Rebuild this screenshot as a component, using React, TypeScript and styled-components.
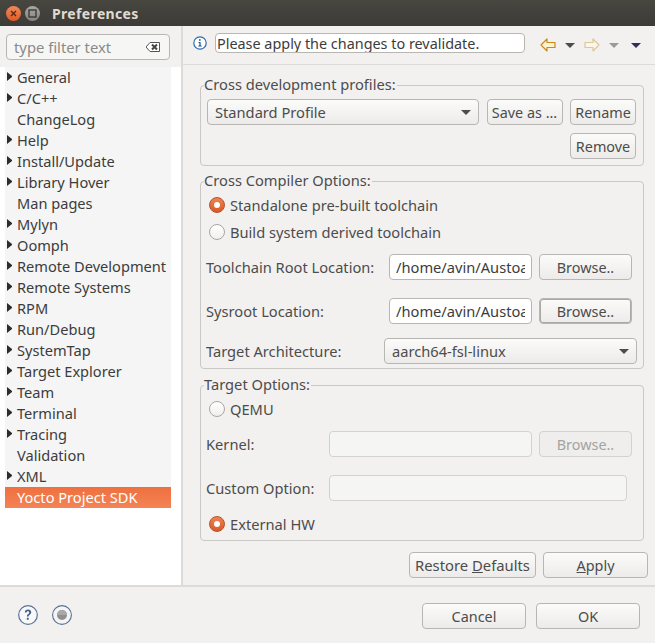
import styled, { createGlobalStyle } from "styled-components";

const GlobalStyle = createGlobalStyle`
  html, body {
    margin: 0;
    padding: 0;
    overflow: hidden;
  }
  * {
    box-sizing: border-box;
  }
`;

const font = `"Noto Sans", "Open Sans", sans-serif`;

const Frame = styled.div`
  width: 655px;
  height: 643px;
  display: flex;
  flex-direction: column;
  background: #f2f1f0;
  font-family: ${font};
  font-size: 14.67px;
  color: #4c4c4c;
`;

const TitleBar = styled.header`
  height: 26px;
  flex: none;
  display: flex;
  align-items: center;
  padding-left: 6px;
  background: linear-gradient(#47463f, #3c3b37);
`;

const WindowButton = styled.span<{ $close?: boolean }>`
  width: 15px;
  height: 15px;
  margin-right: 4px;
  border-radius: 50%;
  display: flex;
  align-items: center;
  justify-content: center;
  background: ${(p) =>
    p.$close
      ? "linear-gradient(#f08a5c, #e25a25)"
      : "linear-gradient(#a9a8a4, #85847f)"};
`;

const Title = styled.h1`
  margin: 0 0 0 8px;
  font-size: 14px;
  font-weight: 700;
  letter-spacing: 0.35px;
  color: #dfdbd2;
`;

const Main = styled.div`
  flex: 1;
  min-height: 0;
  display: flex;
`;

const Sidebar = styled.aside`
  width: 183px;
  flex: none;
  padding: 8px 0 0 5px;
  border-right: 2px solid #dcdbd9;
  background: linear-gradient(#f2f1f0 41px, #fff 41px);
`;

const FilterBox = styled.div`
  width: 164px;
  height: 26px;
  margin-left: 1px;
  padding: 0 9px 0 7px;
  display: flex;
  align-items: center;
  justify-content: space-between;
  background: #f6f6f5;
  border: 1px solid #b8b6b2;
  border-radius: 4px;
  color: #8a8a88;
  font-size: 14.8px;
`;

const Tree = styled.ul`
  list-style: none;
  width: 166px;
  margin: 7px 0 0;
  padding: 0;
  background: #f5f5f5;
`;

const TreeRow = styled.li<{ $selected?: boolean }>`
  height: 21px;
  padding: 0 0 2px 2px;
  display: flex;
  align-items: center;
  font-size: 14.6px;
  white-space: nowrap;
  color: ${(p) => (p.$selected ? "#fff" : "#3c3c3c")};
  background: ${(p) =>
    p.$selected ? "linear-gradient(#ee7040, #f48355)" : "transparent"};
`;

const Twist = styled.span<{ $hidden: boolean }>`
  width: 5px;
  height: 9px;
  margin-right: 5px;
  flex: none;
  visibility: ${(p) => (p.$hidden ? "hidden" : "visible")};
  border-left: 5px solid #2c2c2c;
  border-top: 4.5px solid transparent;
  border-bottom: 4.5px solid transparent;
`;

const Content = styled.section`
  flex: 1;
  min-width: 0;
  display: flex;
  flex-direction: column;
`;

const MessageBar = styled.div`
  height: 39px;
  flex: none;
  padding: 7px 0 0 10px;
  display: flex;
  align-items: flex-start;
  border-bottom: 1px solid #dcdbd9;
`;

const InfoSlot = styled.span`
  margin: 3px 8px 0 0;
  display: flex;
`;

const MessageInput = styled.input`
  width: 310px;
  height: 20px;
  padding: 0 1px;
  font-family: ${font};
  font-size: 14.4px;
  color: #3c3c3c;
  background: #fff;
  border: 1px solid #b8b6b2;
  border-radius: 4px;
  outline: none;
`;

const NavIcons = styled.div`
  margin: 5px 0 0 15px;
  display: flex;
  align-items: center;
`;

const NavArrow = styled.svg<{ $left: number; $flip?: boolean }>`
  margin-left: ${(p) => p.$left}px;
  transform: ${(p) => (p.$flip ? "scaleX(-1)" : "none")};
`;

const NavTriangle = styled.span<{ $color: string; $left: number }>`
  margin-left: ${(p) => p.$left}px;
  border-top: 5px solid ${(p) => p.$color};
  border-left: 5px solid transparent;
  border-right: 5px solid transparent;
`;

const Panels = styled.div`
  flex: 1;
  min-height: 0;
  padding: 12px 7px 0 17px;
  display: flex;
  flex-direction: column;
`;

const Group = styled.fieldset<{ $height: number; $top: number }>`
  width: 444px;
  height: ${(p) => p.$height}px;
  margin: ${(p) => p.$top}px 0 0;
  padding: 0 5px;
  border: 1px solid #c9c8c5;
  border-radius: 4px;
`;

const Legend = styled.legend`
  height: 16px;
  margin-left: -2px;
  padding: 0 1px 0 0;
  line-height: 14px;
`;

const ProfileGrid = styled.div`
  margin: 6px 0 0 1px;
  display: grid;
  grid-template-columns: 272px 76px 66px;
  grid-auto-rows: 26px;
  column-gap: 7.5px;
  row-gap: 8px;
`;

const GridEndButton = styled.button`
  grid-column: 3;
  padding: 0;
  font-family: ${font};
  font-size: 14.4px;
  color: #4c4c4c;
  background: linear-gradient(#fbfbfa, #ecebe9);
  border: 1px solid #b8b6b2;
  border-radius: 4px;
`;

const RadioRow = styled.div<{ $top: number }>`
  height: 22px;
  margin: ${(p) => p.$top}px 0 0 3px;
  display: flex;
  align-items: center;
  gap: 5px;
`;

const RadioMark = styled.span<{ $on?: boolean }>`
  width: 16px;
  height: 16px;
  flex: none;
  border-radius: 50%;
  display: flex;
  align-items: center;
  justify-content: center;
  border: 1px solid ${(p) => (p.$on ? "#b5532c" : "#a9a8a5")};
  background: ${(p) =>
    p.$on
      ? "linear-gradient(#ef8353, #d85a28)"
      : "linear-gradient(#ffffff, #f0efee)"};

  &::after {
    content: "";
    display: ${(p) => (p.$on ? "block" : "none")};
    width: 6px;
    height: 6px;
    border-radius: 50%;
    background: #fff;
  }
`;

const FieldRow = styled.div<{ $cols: string; $top: number }>`
  height: 26px;
  margin-top: ${(p) => p.$top}px;
  display: grid;
  grid-template-columns: ${(p) => p.$cols};
  column-gap: 7px;
  align-items: stretch;
`;

const FieldLabel = styled.label`
  display: flex;
  align-items: center;
  white-space: nowrap;
  margin-right: -7px;
`;

const TextField = styled.input<{ $off?: boolean }>`
  width: 100%;
  min-width: 0;
  padding: 0 6px;
  font-family: ${font};
  font-size: 14.67px;
  color: #3c3c3c;
  background: ${(p) => (p.$off ? "#f5f5f4" : "#fff")};
  border: 1px solid ${(p) => (p.$off ? "#d3d2cf" : "#b8b6b2")};
  border-radius: 4px;
  outline: none;
`;

const Button = styled.button<{ $focus?: boolean; $off?: boolean }>`
  height: 26px;
  padding: 0;
  font-family: ${font};
  font-size: 14.4px;
  white-space: nowrap;
  color: ${(p) => (p.$off ? "#a3a3a1" : "#4c4c4c")};
  background: ${(p) =>
    p.$off ? "#efeeed" : "linear-gradient(#fbfbfa, #ecebe9)"};
  border: 1px solid ${(p) => (p.$off ? "#d3d2cf" : "#b8b6b2")};
  border-radius: 4px;
  box-shadow: ${(p) => (p.$focus ? "inset 0 0 0 1px #a9a8a5" : "none")};
`;

const Combo = styled.div`
  height: 26px;
  padding: 0 6px 0 7px;
  display: flex;
  align-items: center;
  justify-content: space-between;
  background: linear-gradient(#fbfbfa, #ecebe9);
  border: 1px solid #b8b6b2;
  border-radius: 4px;
`;

const ComboArrow = styled.span`
  margin-right: 1px;
  border-top: 5px solid #4c4c4c;
  border-left: 5px solid transparent;
  border-right: 5px solid transparent;
`;

const ActionRow = styled.div`
  margin-top: 11px;
  display: flex;
  justify-content: flex-end;
  gap: 7px;
`;

const RestoreButton = styled(Button)`
  width: 127px;
  font-size: 14.8px;
`;

const ApplyButton = styled(Button)`
  width: 105px;
`;

const Footer = styled.footer`
  height: 58px;
  flex: none;
  padding: 16px 15px 0 18px;
  display: flex;
  align-items: flex-start;
  justify-content: space-between;
  border-top: 2px solid #dcdbd9;
`;

const FooterIcons = styled.div`
  margin-top: 2px;
  display: flex;
  align-items: center;
  gap: 14px;
`;

const FooterButtons = styled.div`
  display: flex;
  gap: 10px;
`;

const DialogButton = styled(Button)`
  width: 104px;
`;

const CloseGlyph = () => (
  <svg width="9" height="9" viewBox="0 0 9 9">
    <path d="M2 2l5 5M7 2L2 7" stroke="#5c2410" strokeWidth="1.3" />
  </svg>
);

const MaxGlyph = () => (
  <svg width="9" height="9" viewBox="0 0 9 9">
    <rect x="1" y="1" width="7" height="7" fill="none" stroke="#3c3b37" strokeWidth="1.4" />
  </svg>
);

const ClearGlyph = () => (
  <svg width="14" height="10" viewBox="0 0 14 10">
    <path d="M0 5L4 .5h9.5v9H4z" fill="#fff" stroke="#555" strokeWidth="1" />
    <path d="M6 2.5l5 5M11 2.5l-5 5" stroke="#444" strokeWidth="2" />
  </svg>
);

const InfoGlyph = () => (
  <svg width="14" height="14" viewBox="0 0 14 14">
    <circle cx="7" cy="7" r="6.2" fill="#fff" stroke="#2a6cb0" strokeWidth="1.2" />
    <path d="M6 3.2h1.6v1.5H6zM5.5 6h2.1v3.6h1v1H5.4v-1h1V7H5.5z" fill="#1d4f86" />
  </svg>
);

const ArrowGlyph = ({ left, right, faded }: { left: number; right?: boolean; faded?: boolean }) => (
  <NavArrow $left={left} $flip={right} width="16" height="14" viewBox="0 0 16 14">
    <path
      d="M1 7l6-6v3.5h8v5H7V13z"
      fill={faded ? "#fbf6e8" : "#fff3cf"}
      stroke={faded ? "#dcc79a" : "#c8891c"}
      strokeWidth="1.2"
      strokeLinejoin="round"
    />
  </NavArrow>
);

const HelpGlyph = () => (
  <svg width="20" height="20" viewBox="0 0 20 20">
    <circle cx="10" cy="10" r="9.3" fill="#f8f8f8" stroke="#5a7294" strokeWidth="1.2" />
    <path
      d="M6.8 7.4C6.9 5.6 8.2 4.6 10 4.6c1.9 0 3.2 1.1 3.2 2.7 0 1.3-.8 2-1.7 2.6-.7.5-.9.9-.9 1.6H8.9c0-1.2.4-1.9 1.3-2.5.7-.5 1-.9 1-1.6 0-.7-.5-1.2-1.3-1.2-.8 0-1.3.5-1.4 1.2zM8.8 12.8h1.9v2H8.8z"
      fill="#3f5f8a"
    />
  </svg>
);

const RecordGlyph = () => (
  <svg width="20" height="20" viewBox="0 0 20 20">
    <circle cx="10" cy="10" r="9.4" fill="#f4f4f4" stroke="#5a7294" strokeWidth="1.1" />
    <circle cx="10" cy="10" r="5" fill="#8f8f8f" />
    <path d="M5 10a5 5 0 0 1 10 0z" fill="#a8a8a8" />
  </svg>
);

const treeItems: [string, boolean][] = [
  ["General", true],
  ["C/C++", true],
  ["ChangeLog", false],
  ["Help", true],
  ["Install/Update", true],
  ["Library Hover", true],
  ["Man pages", false],
  ["Mylyn", true],
  ["Oomph", true],
  ["Remote Development", true],
  ["Remote Systems", true],
  ["RPM", true],
  ["Run/Debug", true],
  ["SystemTap", true],
  ["Target Explorer", true],
  ["Team", true],
  ["Terminal", true],
  ["Tracing", true],
  ["Validation", false],
  ["XML", true],
];

const rootPath = "/home/avin/Austoa/sysroots/aarch64";

export default function App() {
  return (
    <Frame>
      <GlobalStyle />
      <TitleBar>
        <WindowButton $close>
          <CloseGlyph />
        </WindowButton>
        <WindowButton>
          <MaxGlyph />
        </WindowButton>
        <Title>Preferences</Title>
      </TitleBar>
      <Main>
        <Sidebar>
          <FilterBox>
            type filter text
            <ClearGlyph />
          </FilterBox>
          <Tree>
            {treeItems.map(([name, hasChildren]) => (
              <TreeRow key={name}>
                <Twist $hidden={!hasChildren} />
                {name}
              </TreeRow>
            ))}
            <TreeRow $selected>
              <Twist $hidden />
              Yocto Project SDK
            </TreeRow>
          </Tree>
        </Sidebar>
        <Content>
          <MessageBar>
            <InfoSlot>
              <InfoGlyph />
            </InfoSlot>
            <MessageInput readOnly value="Please apply the changes to revalidate." />
            <NavIcons>
              <ArrowGlyph left={0} />
              <NavTriangle $color="#4c4c4c" $left={9} />
              <ArrowGlyph left={9} right faded />
              <NavTriangle $color="#9a9a98" $left={9} />
              <NavTriangle $color="#3a2a5c" $left={12} />
            </NavIcons>
          </MessageBar>
          <Panels>
            <Group $height={89} $top={0}>
              <Legend>Cross development profiles:</Legend>
              <ProfileGrid>
                <Combo>
                  Standard Profile
                  <ComboArrow />
                </Combo>
                <Button>Save as ...</Button>
                <Button>Rename</Button>
                <GridEndButton>Remove</GridEndButton>
              </ProfileGrid>
            </Group>
            <Group $height={196} $top={7}>
              <Legend>Cross Compiler Options:</Legend>
              <RadioRow $top={5}>
                <RadioMark $on />
                Standalone pre-built toolchain
              </RadioRow>
              <RadioRow $top={5}>
                <RadioMark />
                Build system derived toolchain
              </RadioRow>
              <FieldRow $cols="176px 143px 93px" $top={11}>
                <FieldLabel>Toolchain Root Location:</FieldLabel>
                <TextField readOnly value={rootPath} />
                <Button>Browse..</Button>
              </FieldRow>
              <FieldRow $cols="176px 143px 93px" $top={18}>
                <FieldLabel>Sysroot Location:</FieldLabel>
                <TextField readOnly value={rootPath} />
                <Button $focus>Browse..</Button>
              </FieldRow>
              <FieldRow $cols="171px 253px" $top={14}>
                <FieldLabel>Target Architecture:</FieldLabel>
                <Combo>
                  aarch64-fsl-linux
                  <ComboArrow />
                </Combo>
              </FieldRow>
            </Group>
            <Group $height={164} $top={8}>
              <Legend>Target Options:</Legend>
              <RadioRow $top={5}>
                <RadioMark />
                QEMU
              </RadioRow>
              <FieldRow $cols="116px 203px 93px" $top={11}>
                <FieldLabel>Kernel:</FieldLabel>
                <TextField $off readOnly />
                <Button $off>Browse..</Button>
              </FieldRow>
              <FieldRow $cols="116px 298px" $top={18}>
                <FieldLabel>Custom Option:</FieldLabel>
                <TextField $off readOnly />
              </FieldRow>
              <RadioRow $top={12}>
                <RadioMark $on />
                External HW
              </RadioRow>
            </Group>
            <ActionRow>
              <RestoreButton>
                Restore <u>D</u>efaults
              </RestoreButton>
              <ApplyButton>
                <u>A</u>pply
              </ApplyButton>
            </ActionRow>
          </Panels>
        </Content>
      </Main>
      <Footer>
        <FooterIcons>
          <HelpGlyph />
          <RecordGlyph />
        </FooterIcons>
        <FooterButtons>
          <DialogButton>Cancel</DialogButton>
          <DialogButton>OK</DialogButton>
        </FooterButtons>
      </Footer>
    </Frame>
  );
}
